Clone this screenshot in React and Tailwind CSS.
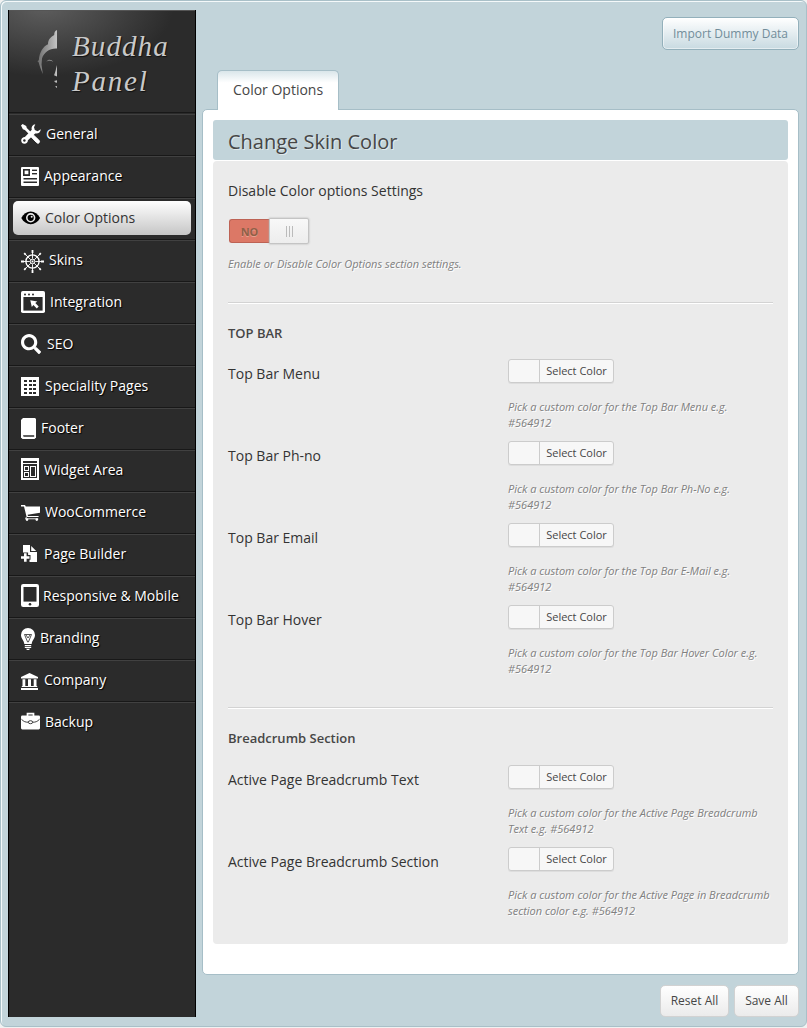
import { FaSearch } from "react-icons/fa";

const Svg = ({ w, h, children, className }) => (
  <svg width={w} height={h} viewBox={`0 0 ${w} ${h}`} fill="currentColor" className={className}>
    {children}
  </svg>
);

const Tools = () => (
  <Svg w={20} h={20}>
    <path d="M0 1.600L1.600 0l3.600 2 .6 2 4 4-1.900 1.900-4-4-2-.6z" />
    <path d="M12.200 10.800l5.600 5.300c1 1 .9 1.900.3 2.600s-1.700.8-2.600-.2l-5.300-5.600z" stroke="currentColor" strokeWidth="1" />
    <path d="M14.300.3c-2.500.3-4.300 2.800-3.500 5.500l-6.900 7.300c-2 0-3.700 1.300-3.700 3.400 0 2 1.400 3.300 3.200 3.300 2.200 0 3.500-1.500 3.500-3.500l7.300-6.900c2.800.7 5.400-1.100 5.600-4.200l-3.200 2-2.800-1.300-.8-2.700z" />
    <circle cx="3.400" cy="16.500" r="1.200" fill="#2b2b2b" />
  </Svg>
);

const Newspaper = () => (
  <Svg w={18} h={19}>
    <rect width="18" height="19" rx="1" />
    <g fill="#2b2b2b">
      <rect x="2" y="2" width="7" height="7" />
      <rect x="11" y="2.6" width="5" height="1.4" />
      <rect x="11" y="6" width="5" height="1.4" />
      <rect x="2.5" y="11" width="13.5" height="1.5" />
      <rect x="2.5" y="14.5" width="13.5" height="1.5" />
    </g>
    <rect x="3.6" y="3.6" width="3.8" height="3.6" />
  </Svg>
);

const Wheel = () => (
  <Svg w={23} h={23}>
    <g stroke="currentColor" fill="none">
      <circle cx="11.5" cy="11.5" r="6.6" strokeWidth="1.4" />
      <circle cx="11.5" cy="11.5" r="2.2" strokeWidth="1" />
      <path
        d="M11.5 0.8v8M11.5 14.2v8M0.8 11.5h8M14.2 11.5h8M4 4l5.8 5.8M13.2 13.2L19 19M19 4l-5.8 5.8M9.8 13.2L4 19"
        strokeWidth=".9"
      />
      <path
        d="M11.5 0v3M11.5 20v3M0 11.5h3M20 11.5h3M3.2 3.2l1.600 1.600M18.200 18.200l1.600 1.600M19.8 3.2l-1.600 1.600M4.800 18.200l-1.600 1.600"
        strokeWidth="1.800"
      />
    </g>
    <circle cx="11.5" cy="11.5" r="1" />
  </Svg>
);

const BrowserWindow = () => (
  <Svg w={24} h={22}>
    <rect width="24" height="22" rx="1.8" />
    <rect x="2.4" y="6" width="19.2" height="13.6" fill="#2b2b2b" />
    <g fill="#2b2b2b">
      <circle cx="4" cy="3.4" r="1" />
      <circle cx="8" cy="3.4" r="1" />
      <circle cx="12" cy="3.4" r="1" />
    </g>
    <path d="M9.3 9.3l7 1.3-2 1.5 3.4 3.4-1.9 1.9-3.4-3.4-1.6 2z" />
  </Svg>
);

const Grid = () => (
  <Svg w={18} h={19}>
    <rect width="18" height="19" />
    <g fill="#2b2b2b" shapeRendering="crispEdges">
      {[3, 7, 11, 15].map((y) =>
        [3, 8, 12].map((x) => <rect key={`${x}-${y}`} x={x} y={y} width="3" height="2" />)
      )}
    </g>
  </Svg>
);

const Book = () => (
  <Svg w={15} h={21}>
    <path d="M2 0h12l1 1v18.500L13.500 21h-12L0 19.500V2z" />
    <path d="M2 17.200h11.200v1.600H2.600z" fill="#2b2b2b" />
  </Svg>
);

const Layout = () => (
  <Svg w={18} h={22}>
    <path d="M0 0h18v22H0z" />
    <g shapeRendering="crispEdges">
      <path d="M2 3h14v2H2zM2 6h14v14H2z" fill="#2b2b2b" />
      <path d="M3 8h5v5H3zM3 14h5v5H3zM9 8h6v11H9z" />
      <path d="M4 9h3v3H4zM4 15h3v3H4zM10 9h4v9h-4z" fill="#2b2b2b" />
    </g>
  </Svg>
);

const Cart = () => (
  <Svg w={19} h={16}>
    <path d="M0 0h4l.8 1.600H19v6.200L6.600 9.800l.4 1.200h10.600v1H5.600L3 1.400H0z" />
    <path d="M5.400 12l-.8 1.800h12.600" fill="none" stroke="currentColor" strokeWidth=".9" />
    <circle cx="6" cy="14.600" r="1.300" />
    <circle cx="15.800" cy="14.600" r="1.300" />
  </Svg>
);

const PagePlus = () => (
  <Svg w={16} h={17}>
    <path d="M2 0h7v7h7v10H8.500v-2.200h1V10h-2.400V7.500H2z" />
    <path d="M10.200 1l5 5h-5z" />
    <path d="M3 8.300h2.600v2.900h2.900v2.600H5.600v2.900H3v-2.900H0v-2.600h3z" />
  </Svg>
);

const Tablet = () => (
  <Svg w={18} h={23}>
    <rect width="18" height="23" rx="2.200" />
    <rect x="2.500" y="3" width="13" height="14.600" fill="#2b2b2b" />
    <circle cx="9" cy="20.200" r="1.300" fill="#2b2b2b" />
  </Svg>
);

const Bulb = () => (
  <Svg w={14} h={22}>
    <path d="M7 0a7 7 0 0 1 7 7c0 3.500-3 5.500-3.300 9H3.300C3 12.500 0 10.500 0 7a7 7 0 0 1 7-7z" />
    <path d="M3.500 6.500h7L7.400 14h-.8zM5 7l2 3 2-3" fill="none" stroke="#2b2b2b" strokeWidth=".8" />
    <path d="M3.800 17h6.400v1.200H3.800zM3.800 18.900h6.400v1.200H3.800zM5 20.700h4L8 22H6z" />
  </Svg>
);

const Bank = () => (
  <Svg w={17} h={17}>
    <path d="M8.500 0L17 4v1.400H0V4zM1.500 6.200h2.800v7H1.500zM7 6.200h3v7H7zM12.700 6.200h2.800v7h-2.800zM.8 13h15.400v1H.8zM0 15h17v2H0z" />
  </Svg>
);

const Briefcase = () => (
  <Svg w={19} h={18}>
    <path d="M6.500 4V1.600h6V4" fill="none" stroke="currentColor" strokeWidth="1.700" />
    <rect y="3.400" width="19" height="14" rx="1.300" />
    <path d="M.4 7.200c2.600 2.600 4 3 6.800 3M18.600 7.200c-2.600 2.600-4 3-6.800 3" fill="none" stroke="#2b2b2b" strokeWidth=".9" />
    <ellipse cx="9.500" cy="10.200" rx="2.200" ry="1.500" fill="none" stroke="#2b2b2b" strokeWidth=".9" />
  </Svg>
);

const Eye = () => (
  <Svg w={20} h={14} className="text-black">
    <path d="M.3 7C2.500 2.800 5.800.5 9.700.5S16.900 2.800 19.100 7c-2.200 4-5.500 6.200-9.400 6.200S2.500 11 .3 7z" />
    <circle cx="9.700" cy="6.800" r="3.900" fill="none" stroke="#e8e8e8" strokeWidth="1.600" />
    <circle cx="10.700" cy="5.700" r="1" fill="#e8e8e8" />
  </Svg>
);

const menu = [
  { label: "General", icon: <Tools />, pad: "pt-[10px]", gap: "ml-[5px]" },
  { label: "Appearance", icon: <Newspaper />, pad: "pt-[11px]", gap: "ml-[5px]" },
  { label: "Color Options", icon: <Eye />, active: true, pad: "pt-[13px]", gap: "ml-1" },
  { label: "Skins", icon: <Wheel />, pad: "pt-[10px]", gap: "ml-[5px]" },
  { label: "Integration", icon: <BrowserWindow />, pad: "pt-[9px]", gap: "ml-[5px]" },
  { label: "SEO", icon: <FaSearch size={20} />, pad: "pt-[10px]", gap: "ml-[6px]" },
  { label: "Speciality Pages", icon: <Grid />, pad: "pt-[11px]", gap: "ml-[6px]" },
  { label: "Footer", icon: <Book />, pad: "pt-[10px]", gap: "ml-[5px]" },
  { label: "Widget Area", icon: <Layout />, pad: "pt-[8px]", gap: "ml-[5px]" },
  { label: "WooCommerce", icon: <Cart />, pad: "pt-[13px]", gap: "ml-[5px]" },
  { label: "Page Builder", icon: <PagePlus />, pad: "pt-[11px]", gap: "ml-[7px]" },
  { label: "Responsive & Mobile", icon: <Tablet />, pad: "pt-[8px]", gap: "ml-[4px]" },
  { label: "Branding", icon: <Bulb />, pad: "pt-[10px]", gap: "ml-[5px]" },
  { label: "Company", icon: <Bank />, pad: "pt-[13px]", gap: "ml-[6px]" },
  { label: "Backup", icon: <Briefcase />, pad: "pt-[10px]", gap: "ml-[5px]" },
];

function MenuItem({ item, last }) {
  return (
    <li className={`h-[42px] border-t border-t-[#414141] ${last ? "" : "border-b border-b-[#181818]"}`}>
      <a
        className={
          item.active
            ? "mx-1 mt-[2px] flex h-[34px] rounded-[5px] bg-linear-to-b from-white to-[#c6c6c6] pl-2 text-[#333]"
            : "flex h-10 pl-3 text-white [text-shadow:1px_1px_1px_#000]"
        }
      >
        <span className={item.active ? "pt-[10px]" : `-mt-px ${item.pad}`}>{item.icon}</span>
        <span className={`${item.gap} ${item.active ? "mt-[6px]" : "mt-[8px]"} text-[14px] leading-[21px] whitespace-nowrap`}>
          {item.label}
        </span>
      </a>
    </li>
  );
}

function Logo() {
  return (
    <div className="flex h-[103px] border-t border-[#555] border-b border-b-[#181818] bg-[radial-gradient(ellipse_130px_70px_at_35px_-5px,#5e5e5e,#2b2b2b)] pt-[18px] pl-7">
      <svg width="22" height="62" viewBox="0 0 22 62" className="shrink-0">
        <defs>
          <linearGradient id="metal">
            <stop stopColor="#6d6d6d" />
            <stop offset="1" stopColor="#c5c5c5" />
          </linearGradient>
        </defs>
        <g fill="url(#metal)">
          <path d="M20 1v18.500C13 19 7 23 5 29.500l-.5 6 1.300 9.500-2.600-6.500-1.700-5.500-1.100-.8 1.400-1C2.500 23 6 17.500 11 15.200c0-5 3-7.200 6.200-9.200 0-2.500.8-4.500 2.800-5z" />
          <path d="M9.300 32.500c2-2.600 5-2.200 7 .2-2.200-1-4.500-1.200-7-.2zM20 36v11.500l-3-1.200c1.600-3.300 2-6.800 3-10.300zM17 52l3-.8v2.600l-1.500-.4zM18 57.500l2-.6v2.200z" />
        </g>
      </svg>
      <div className="ml-[13px] font-['Liberation_Serif',cursive] text-[29px] leading-[35px] text-[#c9c9c9] italic [text-shadow:1px_1px_1px_#111]">
        <div className="tracking-[1.1px]">Buddha</div>
        <div className="tracking-[1.8px]">Panel</div>
      </div>
    </div>
  );
}

function ColorRow({ label, hint }) {
  return (
    <div className="flex h-[82px]">
      <div className="w-[280px] pt-[4px] text-[14px] leading-[21px] text-[#333]">{label}</div>
      <div className="w-[265px]">
        <button className="flex h-[24px] w-[106px] rounded-[3px] border border-[#ccc] bg-[#f7f7f7] shadow-[0_1px_0_#ddd]">
          <span className="h-full w-[31px] border-r border-[#ccc]" />
          <span className="flex-1 text-center text-[11px] leading-[22px] text-[#464646]">Select Color</span>
        </button>
        <p className="mt-4 text-[11px] leading-4 tracking-[-0.01px] text-[#808080] italic [text-shadow:1px_1px_0_#fff]">{hint}</p>
      </div>
    </div>
  );
}

const Divider = ({ className }) => <div className={`h-[2px] border-t border-b border-t-[#d3d3d3] border-b-white ${className}`} />;

const topBar = [
  ["Top Bar Menu", "Pick a custom color for the Top Bar Menu e.g. #564912"],
  ["Top Bar Ph-no", "Pick a custom color for the Top Bar Ph-No e.g. #564912"],
  ["Top Bar Email", "Pick a custom color for the Top Bar E-Mail e.g. #564912"],
  ["Top Bar Hover", "Pick a custom color for the Top Bar Hover Color e.g. #564912"],
];

const breadcrumb = [
  ["Active Page Breadcrumb Text", "Pick a custom color for the Active Page Breadcrumb Text e.g. #564912"],
  ["Active Page Breadcrumb Section", "Pick a custom color for the Active Page in Breadcrumb section color e.g. #564912"],
];

export default function App() {
  return (
    <div className="h-[1028px] w-[807px] overflow-hidden bg-[#f1f1f1] font-['Open_Sans',sans-serif]">
      <div className="flex h-[1027px] rounded-[6px] border border-[#a9c0c8] bg-[#c2d4da] pt-[9px] pl-[7px] shadow-[inset_1px_1px_0_#f4f9fa]">
        <aside className="h-[1007px] w-[188px] shrink-0 border-x border-black bg-[#2b2b2b]">
          <Logo />
          <ul className="mt-px">
            {menu.map((item, i) => (
              <MenuItem key={item.label} item={item} last={i === menu.length - 1} />
            ))}
          </ul>
        </aside>

        <main className="ml-[6px] w-[597px]">
          <div className="flex h-[60px] justify-end pt-[7px]">
            <button className="h-[33px] w-[137px] rounded-[5px] border border-[#93b0bb] bg-linear-to-b from-white to-[#c8dae1] text-[12px] whitespace-nowrap text-[#728d9a] shadow-[inset_0_0_0_1px_#ffffff80]">
              Import Dummy Data
            </button>
          </div>

          <div className="relative z-10 -mb-px ml-[15px] h-[40px] w-[122px] rounded-t-[5px] border border-b-0 border-[#a6bec7] bg-linear-to-b from-[#dae6ea] to-white to-30% text-center text-[14px] leading-[37px] text-[#464646]">
            Color Options
          </div>

          <div className="h-[866px] rounded-[5px] border border-[#a6bec7] bg-white px-[10px] pt-[10px]">
            <h2 className="h-[40px] rounded-[3px] bg-[#c2d4da] pl-[15px] text-[20px] leading-[44px] text-[#464646] [text-shadow:1px_1px_0_#ffffff80]">
              Change Skin Color
            </h2>
            <section className="mt-px h-[783px] rounded-[4px] bg-[#ebebeb] pt-[19px] pr-[15px] pl-[15px]">
              <div className="text-[14px] leading-[21px] text-[#333]">Disable Color options Settings</div>
              <div className="mt-4 ml-px flex h-[27px] items-center">
                <div className="mt-px h-[24px] w-10 rounded-l-[3px] border border-r-0 border-[#bd6254] bg-[#dc7866] text-center text-[11px] leading-[23px] font-bold text-[#8f6048] [text-shadow:0_1px_0_#e8a090]">
                  NO
                </div>
                <div className="mt-px flex h-[26px] w-10 items-center justify-center gap-[2px] rounded-r-[2px] border border-[#c4c4c4] bg-linear-to-b from-[#f8f8f8] to-[#ededed] shadow-[0_0_2px_#aaa]">
                  <i className="h-[11px] w-px bg-[#bbb]" />
                  <i className="h-[11px] w-px bg-[#bbb]" />
                  <i className="h-[11px] w-px bg-[#bbb]" />
                </div>
              </div>
              <p className="mt-3 text-[11px] leading-4 tracking-[-0.01px] text-[#808080] italic [text-shadow:1px_1px_0_#fff]">
                Enable or Disable Color Options section settings.
              </p>
              <Divider className="mt-[30px]" />
              <h3 className="mt-[19px] h-9 text-[13px] leading-5 font-semibold text-[#464646]">TOP BAR</h3>
              {topBar.map(([label, hint]) => (
                <ColorRow key={label} label={label} hint={hint} />
              ))}
              <Divider className="mt-5" />
              <h3 className="mt-[19px] h-[37px] text-[13px] leading-5 font-semibold text-[#464646]">Breadcrumb Section</h3>
              {breadcrumb.map(([label, hint]) => (
                <ColorRow key={label} label={label} hint={hint} />
              ))}
            </section>
          </div>

          <div className="mt-[10px] flex justify-end gap-[5px] text-[12px] text-[#464646]">
            <button className="h-8 w-[69px] rounded-[5px] border border-[#d2d2d2] bg-linear-to-b from-white to-[#ebebeb] whitespace-nowrap">Reset All</button>
            <button className="h-8 w-[65px] rounded-[5px] border border-[#d2d2d2] bg-linear-to-b from-white to-[#ebebeb] whitespace-nowrap">Save All</button>
          </div>
        </main>
      </div>
    </div>
  );
}
